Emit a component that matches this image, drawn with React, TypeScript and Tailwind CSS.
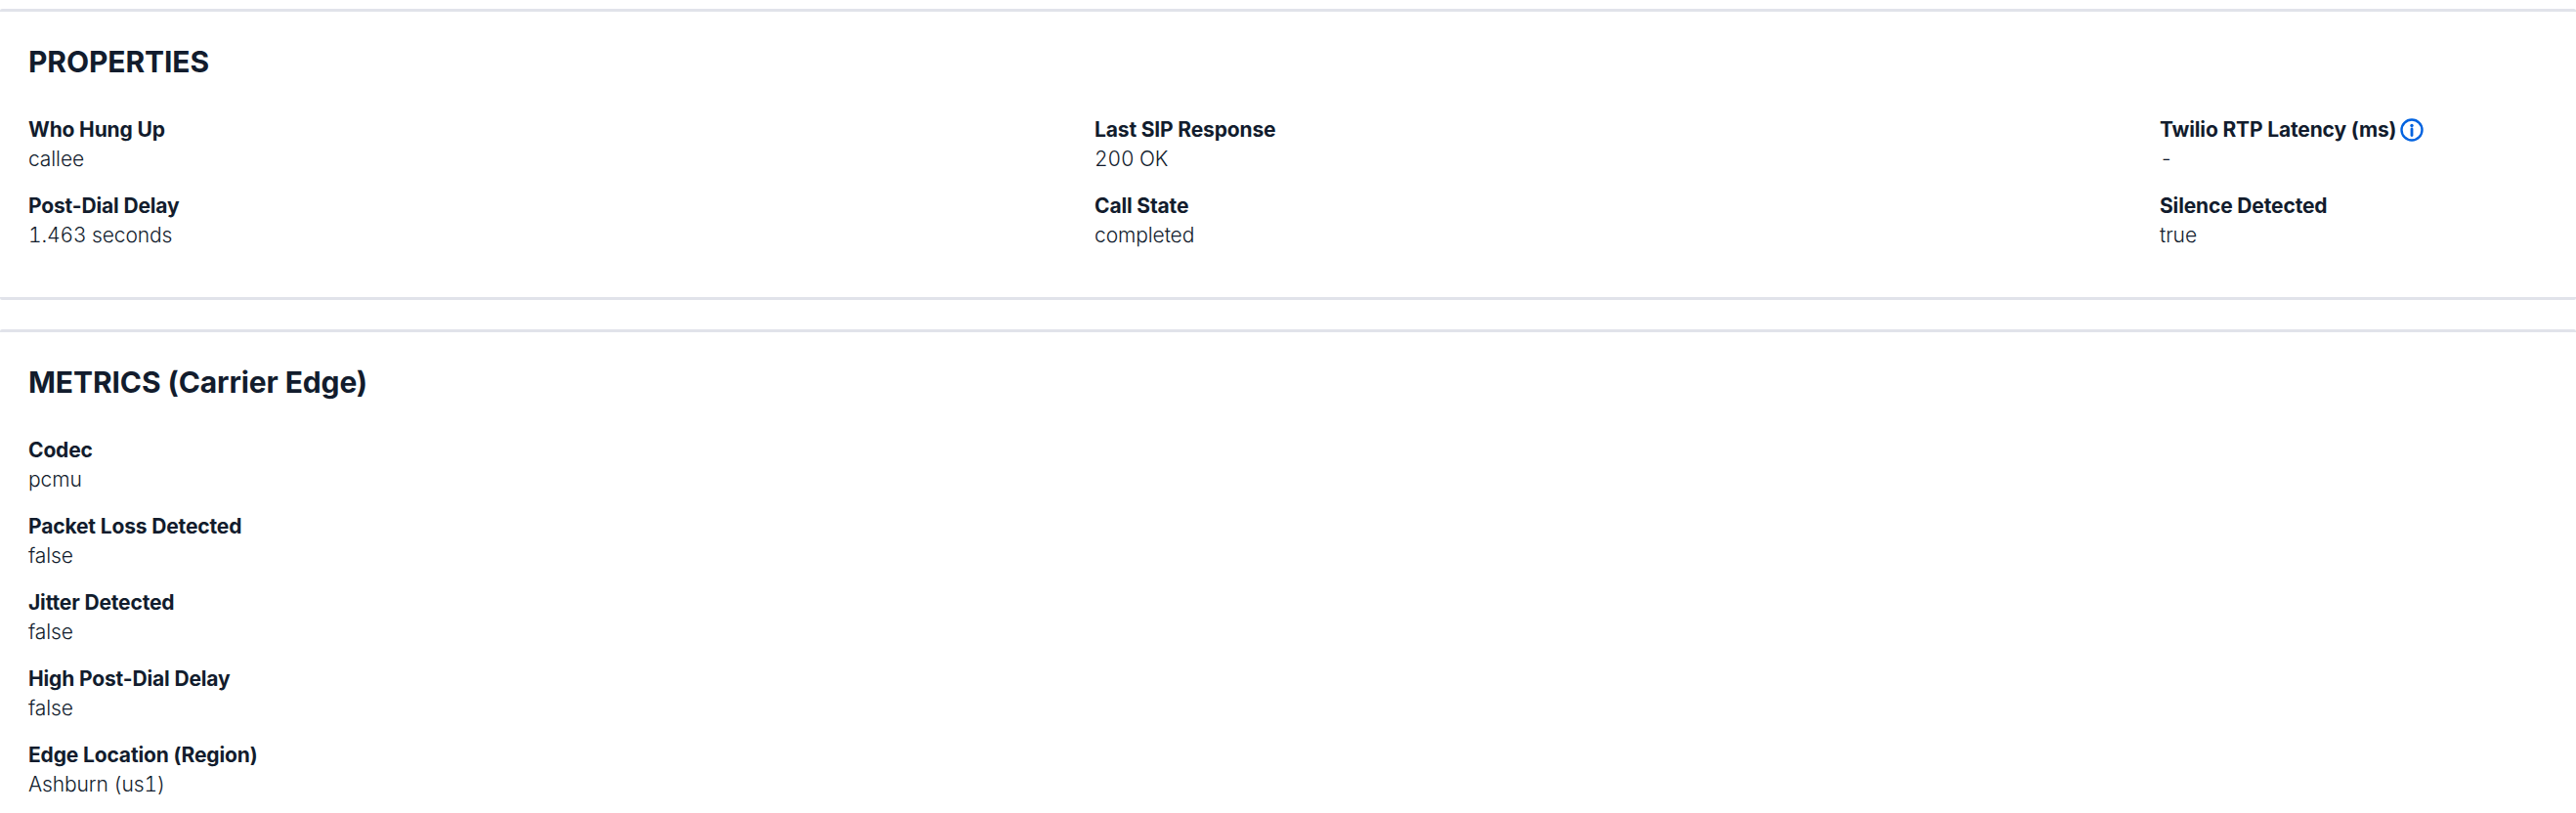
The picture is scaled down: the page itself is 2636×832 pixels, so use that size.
interface Item {
  label: string;
  value: string;
  info?: boolean;
}

const properties: Item[] = [
  { label: "Who Hung Up", value: "callee" },
  { label: "Last SIP Response", value: "200 OK" },
  { label: "Twilio RTP Latency (ms)", value: "-", info: true },
  { label: "Post-Dial Delay", value: "1.463 seconds" },
  { label: "Call State", value: "completed" },
  { label: "Silence Detected", value: "true" },
];

const metrics: Item[] = [
  { label: "Codec", value: "pcmu" },
  { label: "Packet Loss Detected", value: "false" },
  { label: "Jitter Detected", value: "false" },
  { label: "High Post-Dial Delay", value: "false" },
  { label: "Edge Location (Region)", value: "Ashburn (us1)" },
];

function InfoIcon() {
  return (
    <svg width="24" height="24" viewBox="0 0 24 24" fill="none" className="ml-[4px] shrink-0">
      <circle cx="12" cy="12" r="10.5" stroke="#0263e0" strokeWidth="2.4" />
      <circle cx="12" cy="7.5" r="1.7" fill="#0263e0" />
      <path d="M12 11v6.5" stroke="#0263e0" strokeWidth="2.8" strokeLinecap="round" />
    </svg>
  );
}

function Field({ item }: { item: Item }) {
  return (
    <div>
      <div className="flex items-center text-[21px] leading-[30px] font-bold tracking-[-0.15px]">
        {item.label}
        {item.info && <InfoIcon />}
      </div>
      <div className="text-[21px] leading-[30px] font-[350] tracking-[-0.1px] tabular-nums">{item.value}</div>
    </div>
  );
}

export default function App() {
  return (
    <div className="h-[832px] w-[2636px] overflow-hidden bg-white pt-[9px] font-['Inter',sans-serif] text-[#121c2d]">
      <section className="h-[298px] rounded-[2px] border-t-[3px] border-b-[3px] border-[#e1e3ea] px-[29px] pt-[31px]">
        <h2 className="text-[30px] leading-[40px] font-bold tracking-[-0.1px]">PROPERTIES</h2>
        <div className="mt-[35px] grid grid-cols-[1091px_1090px_1fr] gap-y-[18px]">
          {properties.map((p) => (
            <Field key={p.label} item={p} />
          ))}
        </div>
      </section>
      <section className="mt-[30px] rounded-[2px] border-t-[3px] border-[#e1e3ea] px-[29px] pt-[31px]">
        <h2 className="text-[30px] leading-[40px] font-bold tracking-[-0.1px]">METRICS (Carrier Edge)</h2>
        <div className="mt-[35px] flex flex-col gap-y-[18px]">
          {metrics.map((m) => (
            <Field key={m.label} item={m} />
          ))}
        </div>
      </section>
    </div>
  );
}
